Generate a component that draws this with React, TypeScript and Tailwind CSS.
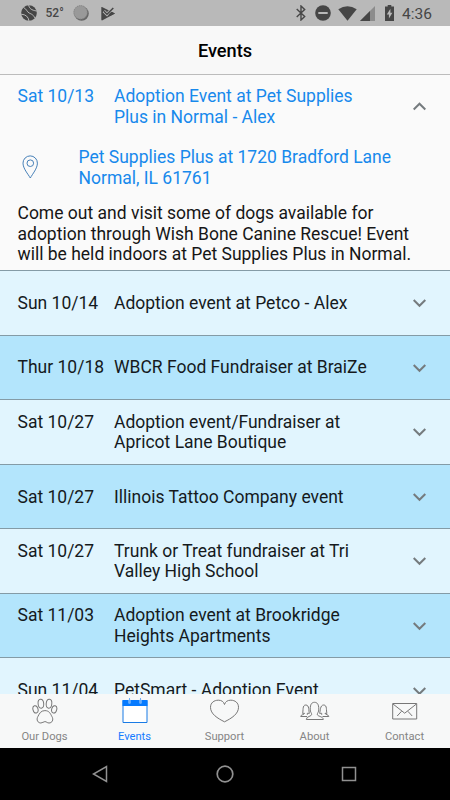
type Event = { date: string; title: string[] };

const events: Event[] = [
  { date: 'Sun 10/14', title: ['Adoption event at Petco - Alex'] },
  { date: 'Thur 10/18', title: ['WBCR Food Fundraiser at BraiZe'] },
  { date: 'Sat 10/27', title: ['Adoption event/Fundraiser at', 'Apricot Lane Boutique'] },
  { date: 'Sat 10/27', title: ['Illinois Tattoo Company event'] },
  { date: 'Sat 10/27', title: ['Trunk or Treat fundraiser at Tri', 'Valley High School'] },
  { date: 'Sat 11/03', title: ['Adoption event at Brookridge', 'Heights Apartments'] },
  { date: 'Sun 11/04', title: ['PetSmart - Adoption Event'] },
];

function Lines({ lines }: { lines: string[] }) {
  return (
    <>
      {lines.map((line) => (
        <span key={line} className="block whitespace-nowrap">{line}</span>
      ))}
    </>
  );
}

function Chevron({ up = false }: { up?: boolean }) {
  return (
    <svg className="w-[14px] h-[10px] shrink-0" viewBox="0 0 14 10" fill="none" stroke="#757b7e" strokeWidth="2">
      <path d={up ? 'M.7 7.5 6.5 1.7 12.3 7.5' : 'M.7 2 6.5 7.8 12.3 2'} />
    </svg>
  );
}

function StatusBar() {
  return (
    <div className="h-[26px] shrink-0 bg-[#b9b9b9] flex items-center text-[#464646]">
      <svg className="w-4 h-4 ml-[20.5px]" viewBox="0 0 16 16">
        <circle cx="8" cy="8" r="7.8" fill="#464646" />
        <g fill="none" stroke="#b9b9b9" strokeWidth="1">
          <path d="M2.3 2.3C6 4.2 5.5 6.6 8.2 8s4.2 1.6 5.8 5.4" />
          <path d="M7.7 0c.4 3.2 2.6 5.3 8 6" />
          <path d="M.2 9.2c4.6.3 7.2 2.6 7.8 6.8" />
        </g>
      </svg>
      <span className="w-[19px] ml-[9px] text-[12px] leading-4 font-medium">52°</span>
      <svg className="w-4 h-4 ml-[8.5px]" viewBox="0 0 16 16">
        <circle cx="8.6" cy="8.6" r="7.2" fill="#666" />
        <circle cx="7.6" cy="7.4" r="6.8" fill="#999" stroke="#7b7b7b" strokeDasharray="1 1" />
      </svg>
      <svg className="w-[14px] h-[15px] ml-[12px]" viewBox="0 0 14 15">
        <path d="M1 1 14 7.4 1 14.4Q.3 14.5.3 13.6V1.6Q.3.8 1 1Z" fill="#464646" />
        <path d="M2.8 5.2 6 8.3 12.7 1.5" fill="none" stroke="#b9b9b9" strokeWidth="3.2" />
        <path d="M3 5.3 6 8.2 12.3 2" fill="none" stroke="#464646" strokeWidth="1.5" />
        <path d="M10.5 5.7 14 7.4l-4.500 2.400-2-1.200Z" fill="#464646" />
      </svg>
      <svg className="w-[10px] h-[16px] ml-auto" viewBox="0 0 10 16" fill="none" stroke="#464646" strokeWidth="1.4">
        <path d="M.7 4 8.7 11.5 5 15V1l3.7 3.5L.7 12" />
      </svg>
      <svg className="w-4 h-4 ml-[9px]" viewBox="0 0 16 16">
        <circle cx="8" cy="8" r="7.8" fill="#464646" />
        <path d="M3.3 8h9.4" stroke="#b9b9b9" strokeWidth="2" />
      </svg>
      <svg className="w-[19px] h-[15px] ml-[7px]" viewBox="0 0 19 15">
        <path d="M.3 3.3Q9.5-2.6 18.7 3.3L9.5 14.8Z" fill="#464646" />
      </svg>
      <svg className="w-[15px] h-[15px] ml-[3px]" viewBox="0 0 15 15">
        <path d="M15 0v15H0Z" fill="#8c8c8c" />
        <path d="M10 5v10H0Z" fill="#464646" />
      </svg>
      <svg className="w-[9px] h-[16px] ml-[10px]" viewBox="0 0 9 16">
        <path d="M2.7 0h3.6v1.5H9V16H0V1.5h2.7Z" fill="#464646" />
        <path d="M5.4 3.8 1.8 9.4h2.1v4.1l3.5-5.7H5.4Z" fill="#b9b9b9" />
      </svg>
      <span className="w-[32px] ml-[8px] mr-[16px] text-[15.5px] leading-5 pt-[2px] whitespace-nowrap">4:36</span>
    </div>
  );
}

function OpenEvent() {
  return (
    <section className="h-[195px] shrink-0 bg-[#fafafa] text-[17.5px] leading-[20.7px]">
      <div className="flex text-[#1789ec] pt-[11px]">
        <span className="w-[96.5px] ml-[17.5px] shrink-0">Sat 10/13</span>
        <div className="w-[298.5px]">
          <Lines lines={['Adoption Event at Pet Supplies', 'Plus in Normal - Alex']} />
        </div>
        <div className="flex items-center"><Chevron up /></div>
      </div>
      <div className="flex text-[#1789ec] mt-[20px]">
        <svg className="w-4 h-6 ml-[22px] mr-[40.5px] mt-[8px]" viewBox="0 0 16 24" fill="none" stroke="#4680b8">
          <path d="M8.3 23C6 19 1 13.5 1 8.1a7.2 7.2 0 0 1 14.4 0C15.4 13.5 10.5 19 8.3 23Z" />
          <circle cx="8.3" cy="8.2" r="3.3" />
        </svg>
        <div>
          <Lines lines={['Pet Supplies Plus at 1720 Bradford Lane', 'Normal, IL 61761']} />
        </div>
      </div>
      <div className="ml-[17.5px] mt-[14px] text-[#161616]">
        <Lines
          lines={[
            'Come out and visit some of dogs available for',
            'adoption through Wish Bone Canine Rescue! Event',
            'will be held indoors at Pet Supplies Plus in Normal.',
          ]}
        />
      </div>
    </section>
  );
}

function EventRow({ event, shaded }: { event: Event; shaded: boolean }) {
  return (
    <div className={`h-[64.55px] pt-px shrink-0 flex items-center border-t border-[#849ba6] text-[17.5px] leading-[20.7px] text-[#151a1d] ${shaded ? 'bg-[#b3e5fc]' : 'bg-[#e1f5fe]'}`}>
      <span className={`w-[96.5px] ml-[17.5px] shrink-0 whitespace-nowrap ${event.title.length > 1 ? 'self-start pt-[10.6px]' : ''}`}>{event.date}</span>
      <div className="w-[298.5px]"><Lines lines={event.title} /></div>
      <Chevron />
    </div>
  );
}

function PawIcon() {
  return (
    <svg className="w-[26px] h-[26px]" viewBox="0 0 26 26" fill="none" stroke="#777" strokeWidth="1">
      <ellipse cx="8.9" cy="5.7" rx="2.8" ry="4.5" transform="rotate(-6 8.9 5.7)" />
      <ellipse cx="17" cy="5.7" rx="2.8" ry="4.5" transform="rotate(6 17 5.7)" />
      <ellipse cx="3.5" cy="11.4" rx="2.5" ry="3.7" transform="rotate(-16 3.5 11.4)" />
      <ellipse cx="22.2" cy="11.4" rx="2.5" ry="3.7" transform="rotate(16 22.2 11.4)" />
      <path d="M12.9 12.6C8.700 12.600 7.400 15.700 6 18.300 3.800 22 6 25 8.900 25c1.800 0 2.300-1.400 4-1.400s2.200 1.400 4.100 1.400c3.100 0 5-3.200 2.800-6.700C18.400 15.700 17.200 12.600 12.900 12.600Z" />
    </svg>
  );
}

function CalendarIcon() {
  return (
    <svg className="w-[26px] h-[26px]" viewBox="0 0 26 26">
      <path d="M1 2.5h24v22H1Z" fill="white" stroke="#197be5" />
      <path d="M.5 2h25v6H.5Z" fill="#057aff" />
      <path d="M7.5 1.500v4M18.500 1.500v4" stroke="#b5d6fc" strokeWidth="2" />
      <path d="M7.5 0v5M18.5 0v5" stroke="#6aaffc" />
    </svg>
  );
}

function HeartIcon() {
  return (
    <svg className="w-[30px] h-[26px]" viewBox="0 0 30 26" fill="none" stroke="#777">
      <path d="M14.5 6.500C13.600 3.500 11.500 2.200 8.300 2.200 4 2.200.5 4.800.5 9.300c0 6.700 7 11 14 14.500 7-3.500 14-7.800 14-14.500 0-4.500-3.400-7.100-7.700-7.100-3.200 0-5.400 1.300-6.300 4.300Z" />
    </svg>
  );
}

function PeopleIcon() {
  return (
    <svg className="w-[30px] h-[26px]" viewBox="0 0 30 26" fill="none" stroke="#777">
      <path d="M6.3 21.5c0-3.500 5.400-2.800 5.400-5.200 0-1.300-1.500-2-1.500-5.200C10.200 6 12 4.300 14.500 4.300s4.300 1.700 4.300 6.800c0 3.200-1.500 3.900-1.500 5.200 0 2.400 5.700 1.700 6 5.200Z" />
      <path d="M9.500 15.300H7.300v1.500M7 18.500H.7c0-2 3.800-1.800 3.800-3.200H2.500C3.600 13 2 7 5.800 7s2.600 6 3.700 8.300" />
      <path d="M19.500 15.300h2.200v1.500M22.500 18.500h6.300c0-2-3.800-1.800-3.800-3.200h2C25.900 13 27.500 7 23.700 7s-3.100 6-4.200 8.300" />
    </svg>
  );
}

function MailIcon() {
  return (
    <svg className="w-[26px] h-[26px]" viewBox="0 0 26 26" fill="none" stroke="#777">
      <path d="M.7 5.5h24V21H.7ZM1 6l11.700 9.200L24.400 6M5.200 18l4.300-4.700M20.200 18l-4.300-4.700" />
    </svg>
  );
}

const tabs = [
  { label: 'Our Dogs', icon: <PawIcon /> },
  { label: 'Events', icon: <CalendarIcon />, active: true },
  { label: 'Support', icon: <HeartIcon /> },
  { label: 'About', icon: <PeopleIcon /> },
  { label: 'Contact', icon: <MailIcon /> },
];

function TabBar() {
  return (
    <nav className="h-[54px] shrink-0 bg-[#f7f8f8] grid grid-cols-5">
      {tabs.map((tab) => (
        <div key={tab.label} className={`flex flex-col items-center pt-[4px] ${tab.active ? 'text-[#157bff]' : 'text-[#858585]'}`}>
          {tab.icon}
          <span className="mt-[6px] mr-px text-[11.2px] leading-[14px]">{tab.label}</span>
        </div>
      ))}
    </nav>
  );
}

export default function App() {
  return (
    <div className="w-[450px] h-[800px] flex flex-col overflow-hidden bg-[#fafafa] font-['Roboto',sans-serif]">
      <StatusBar />
      <header className="h-[49px] shrink-0 bg-[#f8f8f8] border-b border-[#bcbcbc] flex items-center justify-center pt-[2px] text-[18.2px] font-medium text-black">
        Events
      </header>
      <main className="h-[619px] shrink-0 overflow-hidden flex flex-col">
        <OpenEvent />
        {events.map((event, i) => (
          <EventRow key={i} event={event} shaded={i % 2 === 1} />
        ))}
      </main>
      <TabBar />
      <footer className="h-[52px] shrink-0 bg-black flex items-center text-[#919191]">
        <svg className="w-[16px] h-[18px] ml-[92px]" viewBox="0 0 16 18" fill="none" stroke="currentColor" strokeWidth="1.5">
          <path d="M14.5 1.5v15L1.5 9Z" />
        </svg>
        <svg className="w-[18px] h-[18px] ml-[108px]" viewBox="0 0 18 18" fill="none" stroke="currentColor" strokeWidth="1.7">
          <circle cx="9" cy="9" r="7.8" />
        </svg>
        <svg className="w-[16px] h-[16px] ml-[107px]" viewBox="0 0 16 16" fill="none" stroke="currentColor" strokeWidth="1.5">
          <path d="M1.5 1.5h13v13h-13Z" />
        </svg>
      </footer>
    </div>
  );
}
